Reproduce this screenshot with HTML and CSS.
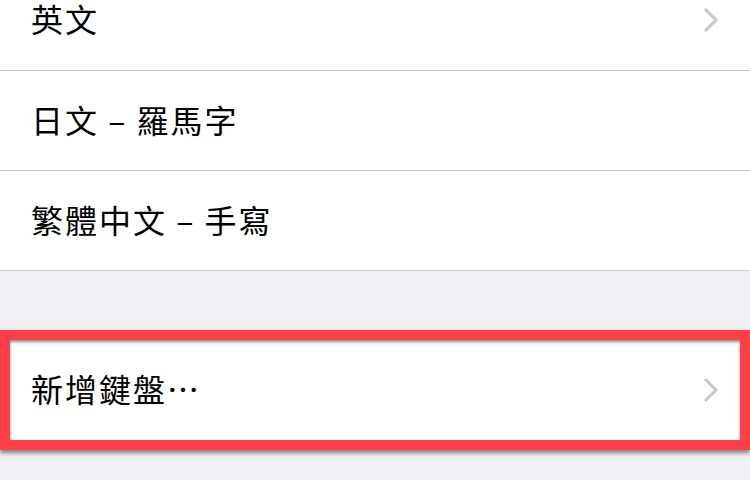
FILE: index.html
```html
<!DOCTYPE html>
<html lang="zh-Hant">
<head>
<meta charset="utf-8">
<link rel="stylesheet" href="styles.css">
</head>
<body>
<div class="screen">
  <ul class="group first">
    <li class="row">
      <span class="label">英文</span>
      <svg class="chev" viewBox="0 0 16 26" width="16" height="26"><path d="M2 2 L13 13 L2 24" fill="none" stroke="#c7c7cc" stroke-width="3"/></svg>
    </li>
    <li class="row">
      <span class="label">日文 – 羅馬字</span>
    </li>
    <li class="row">
      <span class="label">繁體中文 – 手寫</span>
    </li>
  </ul>
  <div class="highlight">
    <ul class="group">
      <li class="row">
        <span class="label">新增鍵盤…</span>
        <svg class="chev" viewBox="0 0 16 26" width="16" height="26"><path d="M2 2 L13 13 L2 24" fill="none" stroke="#c7c7cc" stroke-width="3"/></svg>
      </li>
    </ul>
  </div>
</div>
</body>
</html>
```
FILE: styles.css
```css
html, body {
  margin: 0;
  padding: 0;
  background: #efeff4;
  font-family: "Noto Sans CJK TC", "Noto Sans", sans-serif;
  overflow: hidden;
}
.screen {
  width: 750px;
  height: 480px;
  overflow: hidden;
}
.group {
  list-style: none;
  margin: 0;
  padding: 0;
  background: #fff;
}
.group.first {
  margin-top: -30px;
  border-bottom: 1px solid #c8c7cc;
}
.row {
  height: 100px;
  display: flex;
  align-items: center;
  justify-content: space-between;
  padding: 0 31px 4px 31px;
  box-sizing: border-box;
  color: #000;
  font-size: 32px;
}
.group.first .row + .row {
  border-top: 1px solid #c8c7cc;
}
.label {
  line-height: 1;
  white-space: pre;
  letter-spacing: 2px;
}
.chev {
  display: block;
  margin-top: 4px;
}
.highlight {
  margin-top: 59px;
  border: 10px solid #fe4148;
  box-shadow: 0 3px 4px rgba(0,0,0,0.45);
  position: relative;
}
.highlight::after {
  content: "";
  position: absolute;
  inset: 0;
  box-shadow: inset 0 2px 3px rgba(0,0,0,0.45);
  pointer-events: none;
}
.highlight .row {
  padding-left: 21px;
  padding-right: 21px;
}
```
